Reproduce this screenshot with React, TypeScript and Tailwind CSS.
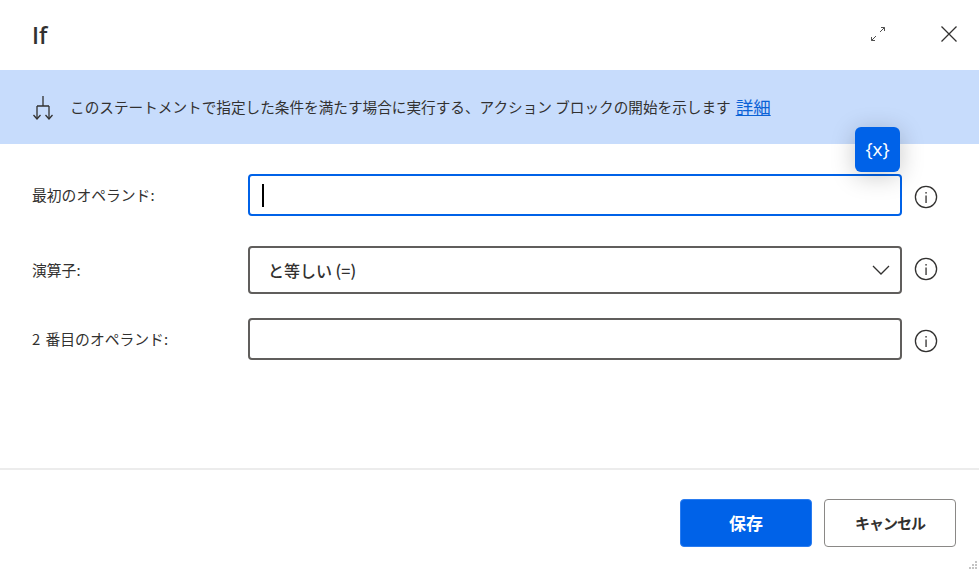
import { useState } from "react";

const font = { jp: "font-['Noto_Sans_CJK_JP','Noto_Sans',sans-serif]" };

function InfoIcon() {
  return (
    <svg width="24" height="24" viewBox="0 0 24 24" fill="none" className="shrink-0">
      <circle cx="12" cy="12" r="10.6" stroke="#323130" strokeWidth="1.3" />
      <rect x="11.4" y="10.5" width="1.3" height="7.5" fill="#323130" />
      <rect x="11.4" y="7" width="1.3" height="1.6" fill="#323130" />
    </svg>
  );
}

function FormRow({ label, className, infoClass, children }: { label: string; className: string; infoClass: string; children?: React.ReactNode }) {
  return (
    <div className={`flex items-center ${className}`}>
      <label className="w-[216px] shrink-0 text-[14.8px] text-[#323130] [word-spacing:2px]">{label}</label>
      {children}
      <div className={`ml-3 flex w-6 shrink-0 ${infoClass}`}>
        <InfoIcon />
      </div>
    </div>
  );
}

export default function App() {
  const [first, setFirst] = useState("");
  const [second, setSecond] = useState("");

  return (
    <div className={`relative flex h-[571px] w-[979px] flex-col overflow-hidden bg-white ${font.jp}`}>
      {/* header */}
      <div className="flex h-[70px] shrink-0 items-center pl-8 pr-[22px]">
        <h1 className="font-['Open_Sans',sans-serif] text-[23px] font-semibold text-[#323130]">If</h1>
        <button className="ml-auto mr-[55px] -translate-y-[1px]" aria-label="expand">
          <svg width="16" height="16" viewBox="0 0 16 16" fill="none" stroke="#505050" strokeWidth="1">
            <path d="M1.5 14.5 6 10M1.5 14.5V11M1.5 14.5H5" />
            <path d="M14.5 1.5 10 6M14.5 1.5H11M14.5 1.5V5" />
          </svg>
        </button>
        <button className="-translate-y-[1px]" aria-label="close">
          <svg width="16" height="16" viewBox="0 0 16 16" fill="none" stroke="#323130" strokeWidth="1.3">
            <path d="M.5.5 15.5 15.5M15.5.5.5 15.5" />
          </svg>
        </button>
      </div>

      {/* description banner */}
      <div className="flex h-[74px] shrink-0 items-center bg-[#c7dcfc] pl-[33px]">
        <svg width="20" height="24" viewBox="0 0 20 24" fill="none" stroke="#323130" strokeWidth="1.3" className="mr-[17px] mt-[1px] shrink-0">
          <path d="M10 0v10M4 10h12M4 10v13M16 10v13" />
          <path d="M.5 19 4 23l3.5-4M12.5 19l3.5 4 3.5-4" />
        </svg>
        <span className="text-[14.64px] text-[#323130]">このステートメントで指定した条件を満たす場合に実行する、アクション ブロックの開始を示します</span>
        <a className="ml-[5px] text-[17.5px] text-[#0b62d6] underline">詳細</a>
      </div>

      {/* form */}
      <div className="flex flex-1 flex-col pl-8 pr-[41px] pt-[30px]">
        <FormRow label="最初のオペランド:" className="" infoClass="translate-y-[2px]">
          <input
            value={first}
            onChange={(e) => setFirst(e.target.value)}
            className="h-[42px] w-[654px] rounded-[4px] border-2 border-[#0062e8] bg-white px-3 outline-none"
          />
        </FormRow>
        <FormRow label="演算子:" className="mt-[30px]" infoClass="-translate-y-[1px]">
          <div className="flex h-12 w-[654px] items-center justify-between rounded-[4px] border-2 border-[#605e5c] bg-white pl-[18px] pr-[10px]">
            <span className="text-[16px] font-medium text-[#323130]">と等しい (=)</span>
            <svg width="18" height="10" viewBox="0 0 18 10" fill="none" stroke="#323130" strokeWidth="1.3">
              <path d="M1 1l8 8 8-8" />
            </svg>
          </div>
        </FormRow>
        <FormRow label="2 番目のオペランド:" className="mt-6" infoClass="translate-y-[2px]">
          <input
            value={second}
            onChange={(e) => setSecond(e.target.value)}
            className="h-[42px] w-[654px] rounded-[4px] border-2 border-[#605e5c] bg-white px-3 outline-none"
          />
        </FormRow>
      </div>

      {/* footer */}
      <div className="flex h-[103px] shrink-0 justify-end gap-3 border-t-2 border-[#ececec] pr-[23px] pt-[29px]">
        <button className="h-12 w-[132px] rounded-[4px] border border-[#2a7cf0] bg-[#0062e8] text-[17px] font-semibold text-white">保存</button>
        <button className="h-12 w-[132px] rounded-[4px] border border-[#8a8886] bg-white text-[15px] font-semibold tracking-[-1px] text-[#323130]">キャンセル</button>
      </div>

      {/* text cursor */}
      <div className="absolute left-[262px] top-[184px] h-[23px] w-[2px] bg-black" />

      {/* variable picker */}
      <button className="absolute left-[855px] top-[127px] flex h-[45px] w-[45px] items-center justify-center rounded-[6px] bg-[#0062e8] font-['Open_Sans',sans-serif] text-[19px] text-white shadow-[0_4px_24px_rgba(0,0,0,0.22)]">
        {"{x}"}
      </button>

      {/* window corner and resize grip */}
      <div className="absolute -left-px -top-px h-2 w-2 rounded-br-[8px] bg-transparent shadow-[-2px_-2px_0_1px_#777]" />
      <svg width="10" height="10" viewBox="0 0 10 10" fill="#c4c4c4" className="absolute bottom-[1px] right-[1px]">
        <rect x="7" y="1" width="2" height="2" />
        <rect x="4" y="4" width="2" height="2" />
        <rect x="7" y="4" width="2" height="2" />
        <rect x="1" y="7" width="2" height="2" />
        <rect x="4" y="7" width="2" height="2" />
        <rect x="7" y="7" width="2" height="2" />
      </svg>
    </div>
  );
}
